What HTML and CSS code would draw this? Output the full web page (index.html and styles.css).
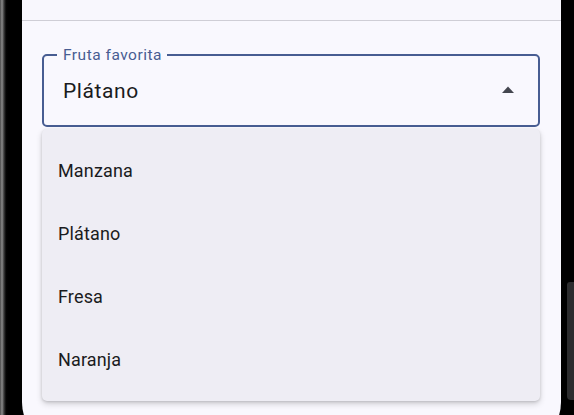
FILE: index.html
```html
<!DOCTYPE html>
<html lang="es">
<head>
<meta charset="utf-8">
<title>Fruta favorita</title>
<link rel="stylesheet" href="styles.css">
</head>
<body>
<div class="device">
  <div class="edge-left"></div>
  <div class="screen">
    <div class="topbar"></div>
    <div class="content">
      <div class="field-wrap">
        <div class="field">
          <span class="label">Fruta favorita</span>
          <span class="value">Plátano</span>
          <svg class="arrow" width="12" height="7" viewBox="0 0 12 7" aria-hidden="true">
            <polygon points="0,7 6,0.5 12,7" fill="#44464f"/>
          </svg>
        </div>
        <ul class="menu">
          <li class="item">Manzana</li>
          <li class="item">Plátano</li>
          <li class="item">Fresa</li>
          <li class="item">Naranja</li>
        </ul>
      </div>
    </div>
  </div>
  <div class="edge-right"><div class="side-button"></div></div>
</div>
</body>
</html>
```

FILE: styles.css
```css
* { box-sizing: border-box; }
html, body {
  margin: 0;
  padding: 0;
  background: #000;
  overflow: hidden;
}
body {
  font-family: Roboto, "Noto Sans", "Liberation Sans", sans-serif;
  color: #1a1b20;
}
.device {
  width: 574px;
  height: 415px;
  display: flex;
  overflow: hidden;
  background: #000;
}
.edge-left {
  width: 22px;
  flex: none;
  background: linear-gradient(to right, #4a4a4a 0, #8c8c8c 2px, #3a3a3a 4px, #050505 6px, #000 8px);
}
.screen {
  width: 539px;
  height: 448px;
  flex: none;
  background: #f9f8fe;
  border-radius: 0 0 46px 46px;
}
.topbar {
  height: 21px;
  border-bottom: 1px solid #cfced6;
  background: #f8f7fd;
}
.content {
  padding: 33px 21px 0 20px;
}
.field-wrap {
  position: relative;
}
.field {
  position: relative;
  height: 73px;
  border: 2px solid #485d92;
  border-radius: 5px;
  display: flex;
  align-items: center;
  padding: 0 24px 0 19px;
}
.label {
  position: absolute;
  left: 13px;
  top: -11px;
  padding: 0 5px 0 6px;
  background: #f9f8fe;
  color: #485d92;
  font-size: 15.5px;
  letter-spacing: 0.5px;
  line-height: 20px;
}
.value {
  flex: 1;
  font-size: 21px;
  letter-spacing: 0.6px;
  color: #1a1b20;
  line-height: 26px;
}
.arrow {
  display: block;
  flex: none;
  margin-top: -2px;
}
.menu {
  position: absolute;
  left: 0;
  right: 0;
  top: 75px;
  margin: 0;
  padding: 10px 0;
  list-style: none;
  background: #eeedf4;
  border-radius: 5px;
  box-shadow: 0 3px 6px rgba(0, 0, 0, 0.16), 0 1px 3px rgba(0, 0, 0, 0.14);
}
.item {
  height: 63px;
  display: flex;
  align-items: center;
  padding-left: 16px;
  font-size: 18px;
  letter-spacing: 0.15px;
  color: #1a1b20;
}
.edge-right {
  width: 13px;
  flex: none;
  display: flex;
  flex-direction: column;
  align-items: flex-end;
  padding-top: 282px;
}
.side-button {
  width: 7px;
  height: 118px;
  background: #2c2c2e;
  border-radius: 3px 0 0 4px;
}
```
